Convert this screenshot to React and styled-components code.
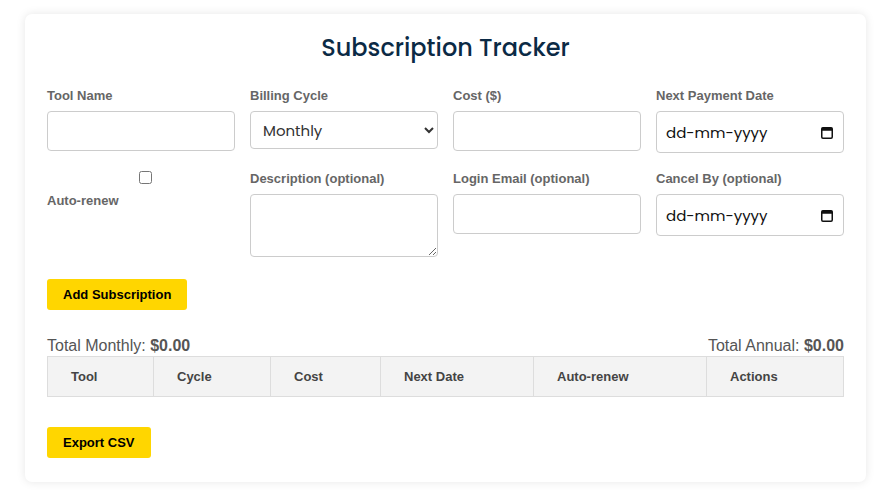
import React from 'react';
import styled, { createGlobalStyle } from 'styled-components';

const GlobalStyle = createGlobalStyle`
  html, body {
    margin: 0;
    padding: 0;
    background: #ffffff;
    font-family: "Liberation Sans", Arial, sans-serif;
  }
`;

const CalendarIcon = () => (
  <svg width="12" height="13" viewBox="0 0 12 13" aria-hidden="true">
    <rect x="0.75" y="1.75" width="10.5" height="10.5" rx="1.2" fill="none" stroke="#111" strokeWidth="1.5" />
    <rect x="0.75" y="1.75" width="10.5" height="3" fill="#111" />
  </svg>
);

const DateField = () => (
  <DateBox>
    <DateInput type="text" placeholder="dd-mm-yyyy" size={1} />
    <CalendarIcon />
  </DateBox>
);

const App = () => {
  return (
    <>
      <GlobalStyle />
      <Page>
        <Card>
          <Title>Subscription Tracker</Title>

          <FormGrid>
            <Field>
              <Label>Tool Name</Label>
              <TextInput type="text" />
            </Field>
            <Field>
              <Label>Billing Cycle</Label>
              <Select defaultValue="Monthly">
                <option>Monthly</option>
                <option>Annual</option>
              </Select>
            </Field>
            <Field>
              <Label>Cost ($)</Label>
              <TextInput type="text" />
            </Field>
            <Field>
              <Label>Next Payment Date</Label>
              <DateField />
            </Field>

            <CheckField>
              <Checkbox type="checkbox" />
              <Label>Auto-renew</Label>
            </CheckField>
            <Field>
              <Label>Description (optional)</Label>
              <TextArea />
            </Field>
            <Field>
              <Label>Login Email (optional)</Label>
              <TextInput type="email" />
            </Field>
            <Field>
              <Label>Cancel By (optional)</Label>
              <DateField />
            </Field>
          </FormGrid>

          <YellowButton>Add Subscription</YellowButton>

          <Totals>
            <span>Total Monthly: <strong>$0.00</strong></span>
            <span>Total Annual: <strong>$0.00</strong></span>
          </Totals>

          <Table>
            <thead>
              <tr>
                <Th $w={106}>Tool</Th>
                <Th $w={117}>Cycle</Th>
                <Th $w={110}>Cost</Th>
                <Th $w={153}>Next Date</Th>
                <Th $w={173}>Auto-renew</Th>
                <Th>Actions</Th>
              </tr>
            </thead>
            <tbody />
          </Table>

          <ExportRow>
            <YellowButton>Export CSV</YellowButton>
          </ExportRow>
        </Card>
      </Page>
    </>
  );
};

export default App;

const Page = styled.div`
  padding: 14px 21px 14px 25px;
`;

const Card = styled.div`
  width: 841px;
  box-sizing: border-box;
  background: #fff;
  border-radius: 7px;
  box-shadow: 0 0 10px rgba(0, 0, 0, 0.1);
  padding: 19px 22px 24px;
`;

const Title = styled.h2`
  margin: 0 0 25px;
  text-align: center;
  font-family: "Poppins", Inter, sans-serif;
  font-weight: 500;
  font-size: 24px;
  line-height: 30px;
  color: #0b2a45;
`;

const FormGrid = styled.div`
  display: grid;
  grid-template-columns: repeat(4, minmax(0, 1fr));
  gap: 18px 15px;
  align-items: start;
`;

const Field = styled.div`
  display: flex;
  flex-direction: column;
  min-width: 0;
`;

const CheckField = styled.div`
  display: flex;
  flex-direction: column;
`;

const Label = styled.label`
  font-size: 13px;
  line-height: 16px;
  font-weight: bold;
  color: #666;
  margin-bottom: 7px;
`;

const Checkbox = styled.input`
  align-self: center;
  width: 13px;
  height: 13px;
  margin: 0 0 9px 8px;
`;

const inputBase = `
  box-sizing: border-box;
  width: 100%;
  border: 1px solid #ccc;
  border-radius: 4px;
  background: #fff;
  font-family: "Poppins", Inter, sans-serif;
  font-size: 15px;
  color: #333;
  outline: none;
`;

const TextInput = styled.input`
  ${inputBase}
  height: 40px;
  padding: 0 10px;
`;

const Select = styled.select`
  ${inputBase}
  height: 38px;
  padding: 0 8px;
`;

const TextArea = styled.textarea`
  ${inputBase}
  height: 63px;
  padding: 8px 10px;
`;

const DateBox = styled.div`
  ${inputBase}
  height: 42px;
  display: flex;
  align-items: center;
  padding: 0 10px 0 9px;
  gap: 8px;
`;

const DateInput = styled.input`
  flex: 1;
  width: 0;
  min-width: 0;
  border: none;
  outline: none;
  padding: 0;
  background: transparent;
  font-family: "Poppins", Inter, sans-serif;
  font-size: 15px;
  color: #111;

  &::placeholder {
    color: #111;
    opacity: 1;
  }
`;

const YellowButton = styled.button`
  height: 31px;
  padding: 0 16px;
  margin-top: 22px;
  border: none;
  border-radius: 3px;
  background: #ffd600;
  color: #000;
  font-family: "Liberation Sans", Arial, sans-serif;
  font-weight: bold;
  font-size: 13px;
  cursor: pointer;
`;

const Totals = styled.div`
  display: flex;
  justify-content: space-between;
  margin-top: 27px;
  font-size: 16px;
  line-height: 18px;
  color: #555;

  strong {
    font-weight: bold;
  }
`;

const Table = styled.table`
  width: 100%;
  margin-top: 1px;
  border-collapse: collapse;
  table-layout: fixed;
`;

const Th = styled.th`
  width: ${(p) => (p.$w ? `${p.$w}px` : 'auto')};
  height: 40px;
  box-sizing: border-box;
  padding: 0 0 0 23px;
  text-align: left;
  background: #f3f3f3;
  border: 1px solid #ddd;
  font-size: 13px;
  font-weight: bold;
  color: #444;
`;

const ExportRow = styled.div`
  margin-top: 8px;
`;
